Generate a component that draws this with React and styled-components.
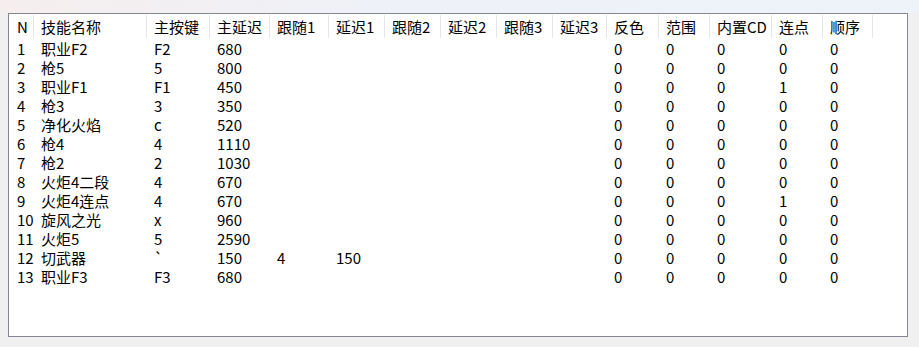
import styled, { createGlobalStyle } from 'styled-components';

const GlobalStyle = createGlobalStyle`
  html, body {
    margin: 0;
    padding: 0;
    background: #f0f0f0;
  }
`;

const COLS = [
  { title: 'N', w: 25 },
  { title: '技能名称', w: 113 },
  { title: '主按键', w: 63 },
  { title: '主延迟', w: 60 },
  { title: '跟随1', w: 59 },
  { title: '延迟1', w: 56 },
  { title: '跟随2', w: 56 },
  { title: '延迟2', w: 56 },
  { title: '跟随3', w: 56 },
  { title: '延迟3', w: 54 },
  { title: '反色', w: 52 },
  { title: '范围', w: 51 },
  { title: '内置CD', w: 62 },
  { title: '连点', w: 51 },
  { title: '顺序', w: 50 },
];

const template = COLS.map((c) => `${c.w}px`).join(' ') + ' 1fr';

const ROWS = [
  ['1', '职业F2', 'F2', '680', '', '', '', '', '', '', '0', '0', '0', '0', '0'],
  ['2', '枪5', '5', '800', '', '', '', '', '', '', '0', '0', '0', '0', '0'],
  ['3', '职业F1', 'F1', '450', '', '', '', '', '', '', '0', '0', '0', '1', '0'],
  ['4', '枪3', '3', '350', '', '', '', '', '', '', '0', '0', '0', '0', '0'],
  ['5', '净化火焰', 'c', '520', '', '', '', '', '', '', '0', '0', '0', '0', '0'],
  ['6', '枪4', '4', '1110', '', '', '', '', '', '', '0', '0', '0', '0', '0'],
  ['7', '枪2', '2', '1030', '', '', '', '', '', '', '0', '0', '0', '0', '0'],
  ['8', '火炬4二段', '4', '670', '', '', '', '', '', '', '0', '0', '0', '0', '0'],
  ['9', '火炬4连点', '4', '670', '', '', '', '', '', '', '0', '0', '0', '1', '0'],
  ['10', '旋风之光', 'x', '960', '', '', '', '', '', '', '0', '0', '0', '0', '0'],
  ['11', '火炬5', '5', '2590', '', '', '', '', '', '', '0', '0', '0', '0', '0'],
  ['12', '切武器', '`', '150', '4', '150', '', '', '', '', '0', '0', '0', '0', '0'],
  ['13', '职业F3', 'F3', '680', '', '', '', '', '', '', '0', '0', '0', '0', '0'],
];

const TopStrip = styled.div`
  height: 13px;
  background: linear-gradient(90deg, #f6eeee 0%, #eef1f7 40%, #eef3fa 100%);
`;

const ListBox = styled.div`
  margin-left: 8px;
  width: 898px;
  height: 322px;
  border: 1px solid #828790;
  background: #fff;
  font-family: 'Noto Sans CJK SC', 'Noto Sans', sans-serif;
  font-size: 15px;
  color: #000;
  overflow: hidden;
`;

const HeaderRow = styled.div`
  display: grid;
  grid-template-columns: ${template};
  height: 24px;
  padding-top: 1px;
`;

const HeaderCell = styled.div`
  height: 23px;
  line-height: 23px;
  padding-left: ${(p) => (p.$first ? 8 : 7)}px;
  border-right: ${(p) => (p.$filler ? 'none' : '1px solid #e5e5e5')};
  white-space: nowrap;
  overflow: hidden;
`;

const Row = styled.div`
  display: grid;
  grid-template-columns: ${template};
  height: 19px;
  line-height: 19px;
`;

const Cell = styled.div`
  padding-left: ${(p) => (p.$first ? 8 : 7)}px;
  white-space: nowrap;
  overflow: hidden;
`;

export default function App() {
  return (
    <>
      <GlobalStyle />
      <TopStrip />
      <ListBox>
        <HeaderRow>
          {COLS.map((c, i) => (
            <HeaderCell key={c.title} $first={i === 0}>
              {c.title}
            </HeaderCell>
          ))}
          <HeaderCell $filler />
        </HeaderRow>
        {ROWS.map((r) => (
          <Row key={r[0]}>
            {r.map((v, i) => (
              <Cell key={i} $first={i === 0}>
                {v}
              </Cell>
            ))}
            <Cell />
          </Row>
        ))}
      </ListBox>
    </>
  );
}
